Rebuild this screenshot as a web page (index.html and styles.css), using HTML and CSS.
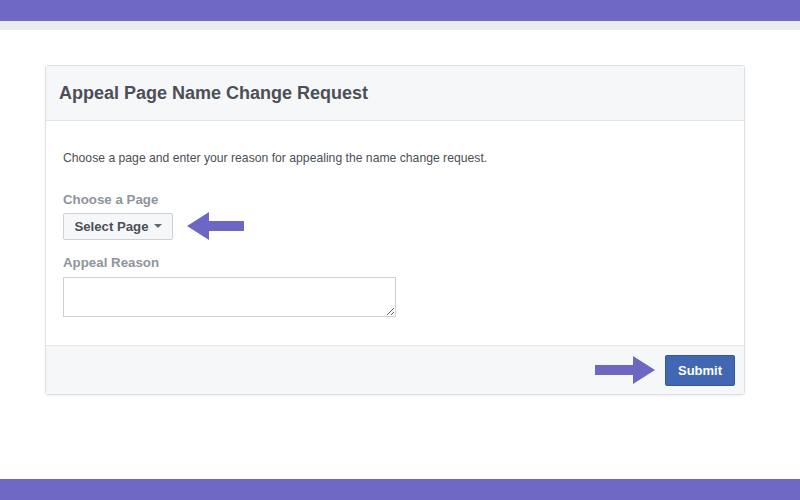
FILE: index.html
```html
<!DOCTYPE html>
<html lang="en">

<head>
    <meta charset="UTF-8">
    <title>Appeal Page Name Change Request</title>
    <link rel="stylesheet" href="styles.css">
</head>

<body>
    <div class="top-bar"></div>
    <div class="sub-bar"></div>

    <main class="page">
        <div class="card">
            <div class="card-header">
                <h2>Appeal Page Name Change Request</h2>
            </div>

            <div class="card-body">
                <p class="intro">Choose a page and enter your reason for appealing the name change request.</p>

                <label class="field-label">Choose a Page</label>
                <div class="select-row">
                    <button class="select-btn">Select Page <span class="caret"></span></button>
                    <svg class="arrow" width="58" height="30" viewBox="0 0 58 30">
                        <path d="M0 15 L22 1 L22 10 L57 10 L57 20 L22 20 L22 29 Z" fill="#6d67c4" />
                    </svg>
                </div>

                <label class="field-label reason-label">Appeal Reason</label>
                <textarea class="reason"></textarea>
            </div>

            <div class="card-footer">
                <svg class="arrow" width="60" height="30" viewBox="0 0 60 30">
                    <path d="M60 15 L38 1 L38 10 L0 10 L0 20 L38 20 L38 29 Z" fill="#6d67c4" />
                </svg>
                <button class="submit">Submit</button>
            </div>
        </div>
    </main>

    <div class="bottom-bar"></div>
</body>

</html>
```

FILE: styles.css
```css
* {
    margin: 0;
    padding: 0;
    box-sizing: border-box;
}

html,
body {
    height: 100%;
}

body {
    display: flex;
    flex-direction: column;
    background: #fff;
    font-family: 'Liberation Sans', Arial, sans-serif;
    color: #4b4f56;
}

.top-bar {
    height: 21px;
    background: #6f69c5;
}

.sub-bar {
    height: 9px;
    background: #e9ebee;
}

.page {
    flex: 1;
    padding: 35px 55px 0 45px;
}

.card {
    width: 700px;
    border: 1px solid #dddfe2;
    border-radius: 3px;
    box-shadow: 0 1px 2px rgba(0, 0, 0, 0.06);
}

.card-header {
    height: 55px;
    display: flex;
    align-items: center;
    padding: 0 13px;
    background: #f6f7f9;
    border-bottom: 1px solid #e5e6e9;
}

.card-header h2 {
    font-size: 18px;
    font-weight: bold;
    color: #4b4f56;
}

.card-body {
    display: flex;
    flex-direction: column;
    align-items: flex-start;
    padding: 30px 17px 28px;
}

.intro {
    font-size: 12.2px;
    color: #4b4f56;
    margin-bottom: 27px;
}

.field-label {
    font-size: 13.3px;
    font-weight: bold;
    color: #90949c;
    margin-bottom: 4px;
}

.reason-label {
    margin-bottom: 7px;
}

.select-row {
    display: flex;
    align-items: center;
    gap: 14px;
    margin-bottom: 14px;
}

.select-btn {
    height: 27px;
    width: 110px;
    font-family: 'Liberation Sans', Arial, sans-serif;
    font-size: 13.2px;
    font-weight: bold;
    color: #4b4f56;
    background: #f6f7f9;
    border: 1px solid #ced0d4;
    border-radius: 2px;
    display: flex;
    align-items: center;
    justify-content: center;
    gap: 5px;
}

.caret {
    width: 0;
    height: 0;
    border-left: 4px solid transparent;
    border-right: 4px solid transparent;
    border-top: 4px solid #606770;
}

.reason {
    width: 333px;
    height: 40px;
    border: 1px solid #ccd0d5;
    resize: vertical;
}

.card-footer {
    height: 49px;
    display: flex;
    align-items: center;
    justify-content: flex-end;
    gap: 10px;
    padding: 0 9px;
    background: #f6f7f9;
    border-top: 1px solid #e5e6e9;
}

.submit {
    width: 70px;
    height: 31px;
    font-family: 'Liberation Sans', Arial, sans-serif;
    font-size: 13px;
    font-weight: bold;
    color: #fff;
    background: #4267b2;
    border: 1px solid #365899;
    border-radius: 2px;
}

.bottom-bar {
    height: 21px;
    background: #6f69c5;
}
```
